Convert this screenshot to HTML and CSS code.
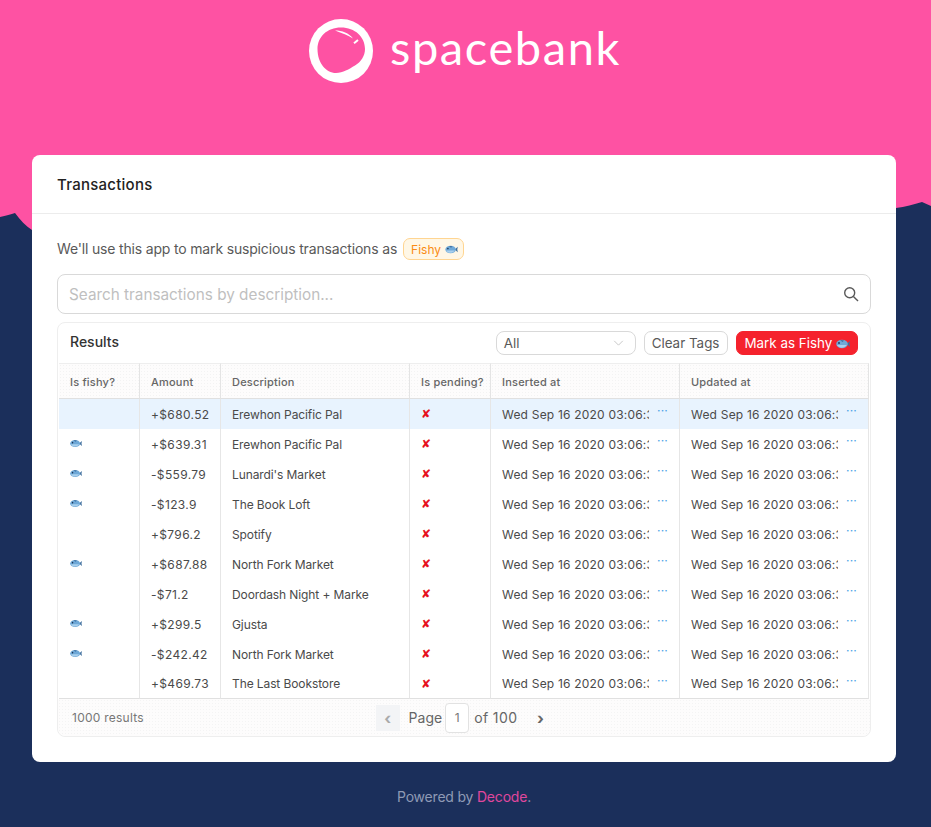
FILE: index.html
```html
<!DOCTYPE html>
<html lang="en">
<head>
<meta charset="utf-8">
<title>Spacebank Transactions</title>
<link rel="stylesheet" href="styles.css">
</head>
<body>
<svg class="backdrop" viewBox="0 0 931 827" preserveAspectRatio="none" aria-hidden="true">
  <path class="backdrop-sky" d="M0 217 C6 216 11 214 15 213 C20 220 26 226 32 230 L896 230 L896 208 C905 207 914 204 922 202 C925 203 928 205 931 206 L931 0 L0 0 Z"/>
</svg>
<svg width="0" height="0" class="defs" aria-hidden="true">
  <symbol id="fish" viewBox="0 0 14 10">
    <path fill="#3f6f9e" d="M10.5 5 L14 2 L13.4 5 L14 8 Z"/>
    <ellipse cx="6" cy="5" rx="5.8" ry="4.2" fill="#6fa9d8"/>
    <path fill="#a9d0ee" d="M1 6 C3 9.5 8 9.5 10.8 6 Z"/>
    <path fill="#3f6f9e" d="M4 1 L8 1.4 L6.5 3 Z"/>
    <circle cx="3" cy="4" r="0.9" fill="#1d3557"/>
  </symbol>
</svg>
<div class="page">
  <header class="brand">
    <svg class="brand-mark" viewBox="0 0 64 64" aria-hidden="true">
      <circle cx="32" cy="32" r="32" fill="#fff"/>
      <path class="brand-hole" d="M32 8.5 C18 8.5 8.5 18 8.5 30 C8.5 44 17 54 27 54 C34 54 40 50 46 46.5 C52 43 56 37 56 30 C56 18 46 8.5 32 8.5 Z"/>
      <path fill="#fff" d="M26 11.5 C33 11.5 40 14 44 19.5 C39 16.5 33 14 26 11.5 Z"/>
      <path d="M45 24.3 L49 21" stroke="#fff" stroke-width="2"/>
    </svg>
    <span class="brand-name">spacebank</span>
  </header>

  <main class="card">
    <h1 class="card-title">Transactions</h1>
    <div class="card-body">
      <p class="intro">We'll use this app to mark suspicious transactions as <span class="tag">Fishy <svg class="fish"><use href="#fish"/></svg></span></p>

      <div class="search">
        <span class="search-placeholder">Search transactions by description...</span>
        <svg class="search-icon" viewBox="0 0 16 16" aria-hidden="true"><circle cx="6.7" cy="6.7" r="5"/><path d="M10.4 10.4 L15 15"/></svg>
      </div>

      <section class="panel">
        <div class="toolbar">
          <h2 class="toolbar-title">Results</h2>
          <div class="select">All <svg class="select-caret" viewBox="0 0 12 7" aria-hidden="true"><path d="M1 1 L6 6 L11 1"/></svg></div>
          <button class="btn btn-clear">Clear Tags</button>
          <button class="btn btn-danger">Mark as Fishy <svg class="fish"><use href="#fish"/></svg></button>
        </div>

        <table class="grid">
          <colgroup>
            <col class="c-narrow"><col class="c-narrow"><col class="c-wide"><col class="c-narrow"><col class="c-wide"><col class="c-wide">
          </colgroup>
          <thead>
            <tr><th>Is fishy?</th><th>Amount</th><th>Description</th><th class="tight">Is pending?</th><th>Inserted at</th><th>Updated at</th></tr>
          </thead>
          <tbody>
            <tr class="selected"><td></td><td class="amount">+$680.52</td><td class="desc">Erewhon Pacific Pal</td><td class="no">✘</td><td><div class="dt"><span class="dt-text">Wed Sep 16 2020 03:06:33 GMT</span><span class="more">···</span></div></td><td><div class="dt"><span class="dt-text">Wed Sep 16 2020 03:06:33 GMT</span><span class="more">···</span></div></td></tr>
            <tr><td><svg class="fish"><use href="#fish"/></svg></td><td class="amount">+$639.31</td><td class="desc">Erewhon Pacific Pal</td><td class="no">✘</td><td><div class="dt"><span class="dt-text">Wed Sep 16 2020 03:06:33 GMT</span><span class="more">···</span></div></td><td><div class="dt"><span class="dt-text">Wed Sep 16 2020 03:06:33 GMT</span><span class="more">···</span></div></td></tr>
            <tr><td><svg class="fish"><use href="#fish"/></svg></td><td class="amount">-$559.79</td><td class="desc">Lunardi's Market</td><td class="no">✘</td><td><div class="dt"><span class="dt-text">Wed Sep 16 2020 03:06:33 GMT</span><span class="more">···</span></div></td><td><div class="dt"><span class="dt-text">Wed Sep 16 2020 03:06:33 GMT</span><span class="more">···</span></div></td></tr>
            <tr><td><svg class="fish"><use href="#fish"/></svg></td><td class="amount">-$123.9</td><td class="desc">The Book Loft</td><td class="no">✘</td><td><div class="dt"><span class="dt-text">Wed Sep 16 2020 03:06:33 GMT</span><span class="more">···</span></div></td><td><div class="dt"><span class="dt-text">Wed Sep 16 2020 03:06:33 GMT</span><span class="more">···</span></div></td></tr>
            <tr><td></td><td class="amount">+$796.2</td><td class="desc">Spotify</td><td class="no">✘</td><td><div class="dt"><span class="dt-text">Wed Sep 16 2020 03:06:33 GMT</span><span class="more">···</span></div></td><td><div class="dt"><span class="dt-text">Wed Sep 16 2020 03:06:33 GMT</span><span class="more">···</span></div></td></tr>
            <tr><td><svg class="fish"><use href="#fish"/></svg></td><td class="amount">+$687.88</td><td class="desc">North Fork Market</td><td class="no">✘</td><td><div class="dt"><span class="dt-text">Wed Sep 16 2020 03:06:33 GMT</span><span class="more">···</span></div></td><td><div class="dt"><span class="dt-text">Wed Sep 16 2020 03:06:33 GMT</span><span class="more">···</span></div></td></tr>
            <tr><td></td><td class="amount">-$71.2</td><td class="desc">Doordash Night + Marke</td><td class="no">✘</td><td><div class="dt"><span class="dt-text">Wed Sep 16 2020 03:06:33 GMT</span><span class="more">···</span></div></td><td><div class="dt"><span class="dt-text">Wed Sep 16 2020 03:06:33 GMT</span><span class="more">···</span></div></td></tr>
            <tr><td><svg class="fish"><use href="#fish"/></svg></td><td class="amount">+$299.5</td><td class="desc">Gjusta</td><td class="no">✘</td><td><div class="dt"><span class="dt-text">Wed Sep 16 2020 03:06:33 GMT</span><span class="more">···</span></div></td><td><div class="dt"><span class="dt-text">Wed Sep 16 2020 03:06:33 GMT</span><span class="more">···</span></div></td></tr>
            <tr><td><svg class="fish"><use href="#fish"/></svg></td><td class="amount">-$242.42</td><td class="desc">North Fork Market</td><td class="no">✘</td><td><div class="dt"><span class="dt-text">Wed Sep 16 2020 03:06:33 GMT</span><span class="more">···</span></div></td><td><div class="dt"><span class="dt-text">Wed Sep 16 2020 03:06:33 GMT</span><span class="more">···</span></div></td></tr>
            <tr><td></td><td class="amount">+$469.73</td><td class="desc">The Last Bookstore</td><td class="no">✘</td><td><div class="dt"><span class="dt-text">Wed Sep 16 2020 03:06:33 GMT</span><span class="more">···</span></div></td><td><div class="dt"><span class="dt-text">Wed Sep 16 2020 03:06:33 GMT</span><span class="more">···</span></div></td></tr>
          </tbody>
        </table>

        <footer class="pager-bar">
          <span class="count">1000 results</span>
          <div class="pager">
            <span class="pager-btn pager-prev">‹</span>
            <span class="pager-label">Page</span>
            <span class="pager-input">1</span>
            <span class="pager-label pager-total">of 100</span>
            <span class="pager-btn pager-next">›</span>
          </div>
        </footer>
      </section>
    </div>
  </main>

  <p class="powered">Powered by <span class="powered-link">Decode</span>.</p>
</div>
</body>
</html>
```
FILE: styles.css
```css
* { box-sizing: border-box; }
html, body { margin: 0; padding: 0; }
body {
  position: relative;
  height: 827px;
  overflow: hidden;
  background: #1b2f5b;
  font-family: Inter, "Liberation Sans", sans-serif;
  color: #444;
}
.backdrop { position: absolute; inset: 0; width: 931px; height: 827px; }
.backdrop-sky { fill: #fe52a3; }
.defs { position: absolute; }
.page { position: relative; width: 864px; margin-left: 32px; }

.brand { height: 155px; padding: 19px 0 0 2px; display: flex; align-items: flex-start; justify-content: center; gap: 17px; }
.brand-mark { width: 64px; height: 64px; flex: none; }
.brand-hole { fill: #fe52a3; }
.brand-name { font-family: Lato, sans-serif; font-size: 47px; line-height: 56px; color: #fff; letter-spacing: 1.6px; }

.card { height: 607px; background: #fff; border-radius: 8px; }
.card-title { margin: 0; height: 59px; padding: 0 25px; border-bottom: 1px solid #ececec; font-size: 15px; font-weight: 500; line-height: 60px; color: #222; letter-spacing: 0.25px; }
.card-body { padding: 22px 25px 0; }
.intro { margin: 0; height: 25px; display: flex; align-items: center; gap: 6px; font-size: 14px; color: #595959; letter-spacing: -0.17px; }
.tag { display: inline-flex; align-items: center; gap: 4px; height: 22px; margin-top: 1px; padding: 0 5px 0 7px; border: 1px solid #ffd591; border-radius: 7px; background: #fff7e6; color: #fa8c16; font-size: 12px; letter-spacing: 0; }
.fish { width: 14px; height: 10px; vertical-align: -1px; }
.tag .fish { width: 13px; height: 9px; }

.search { margin-top: 13px; height: 40px; padding: 0 11px; display: flex; align-items: center; justify-content: space-between; border: 1px solid #d9d9d9; border-radius: 8px; }
.search-placeholder { font-size: 15.3px; color: #bfbfbf; }
.search-icon { width: 16px; height: 16px; fill: none; stroke: #595959; stroke-width: 1.4; }

.panel { margin-top: 8px; height: 415px; border: 1px solid #eee; border-radius: 8px; }
.toolbar { height: 40px; padding: 8px 12px 0; display: flex; align-items: flex-start; gap: 8px; }
.toolbar-title { margin: 0 auto 0 0; font-size: 14px; font-weight: 500; line-height: 22px; color: #333; }
.select { width: 140px; height: 24px; padding: 0 7px; display: flex; align-items: center; justify-content: space-between; border: 1px solid #d9d9d9; border-radius: 8px; font-size: 13.4px; color: #595959; }
.select-caret { width: 11px; height: 6px; margin-right: 4px; fill: none; stroke: #bfbfbf; stroke-width: 1; }
.btn { height: 24px; padding: 0 7px; border: 1px solid #d9d9d9; border-radius: 7px; background: #fff; font: 13.4px Inter, sans-serif; color: #595959; white-space: nowrap; }
.btn-clear { padding-right: 8px; }
.btn-danger { border-color: #f5222d; background: #f5222d; color: #fff; }

.grid { margin-left: 1px; width: 810px; table-layout: fixed; border-collapse: separate; border-spacing: 0; font-size: 12px; }
.c-narrow { width: 81px; }
.c-wide { width: 189px; }
.grid th { height: 36px; padding: 1px 11px 0; border-top: 1px solid #eee; border-right: 1px solid #e4e4e4; border-bottom: 1px solid #e0e0e0; background: #fdfcfc radial-gradient(#f3f3f3 0.6px, transparent 0.8px) 0 0 / 3px 3px; font-size: 11px; font-weight: 500; text-align: left; color: #666; white-space: nowrap; letter-spacing: 0.2px; }
.grid th.tight { padding-right: 0; }
.grid td { height: 30px; padding: 0 11px; border-right: 1px solid #e6e6e6; color: #4a4a4a; white-space: nowrap; overflow: hidden; letter-spacing: 0.2px; }
.grid td.amount { letter-spacing: 0.35px; }
.grid td.desc { letter-spacing: -0.1px; }
.grid tbody tr:last-child td { border-bottom: 1px solid #e0e0e0; }
.grid .selected td { background: #e8f3fe; }
.grid td.no { font-family: "DejaVu Sans", sans-serif; font-size: 12px; color: #e6101e; }
.grid .fish { display: block; width: 12px; height: 9px; margin-top: -1px; }
.dt { display: flex; align-items: center; }
.dt-text { width: 147px; overflow: hidden; flex: none; }
.more { margin-left: 8px; margin-top: -6px; font-size: 12px; line-height: 12px; color: #4a9fe6; }

.pager-bar { height: 37px; display: grid; grid-template-columns: 1fr auto 1fr; align-items: center; padding: 0 14px; background: #fdfcfc radial-gradient(#f4f4f4 0.6px, transparent 0.8px) 0 0 / 3px 3px; border-radius: 0 0 8px 8px; }
.count { font-size: 12px; color: #777; letter-spacing: 0.25px; }
.pager { display: flex; align-items: center; }
.pager-btn { width: 24px; height: 26px; display: flex; align-items: center; justify-content: center; font-size: 16px; font-weight: 700; color: #666; }
.pager-prev { background: #f3f4f6; color: #aaa; margin-right: 9px; }
.pager-next { margin-left: 11px; }
.pager-label { font-size: 14px; color: #666; }
.pager-total { letter-spacing: 0.4px; }
.pager-input { width: 24px; height: 30px; margin: 0 5px 0 3px; display: flex; align-items: center; justify-content: center; border: 1px solid #e2e2e2; border-radius: 4px; background: #fff; font-size: 12px; color: #777; }

.powered { margin: 26px 0 0; text-align: center; font-size: 14px; line-height: 18px; color: #8f9ab5; letter-spacing: -0.2px; }
.powered-link { color: #e0479e; }
```
